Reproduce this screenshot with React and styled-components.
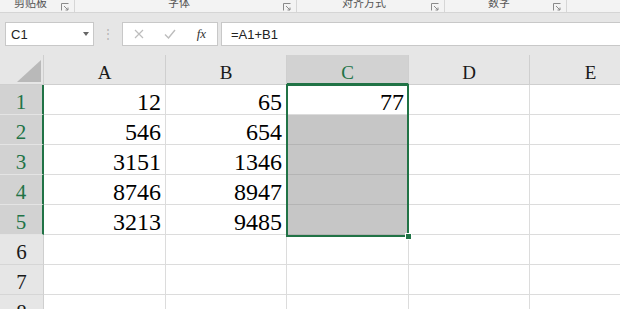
import React from 'react'
import styled, { createGlobalStyle } from 'styled-components'

const GlobalStyle = createGlobalStyle`
  html, body {
    margin: 0;
    padding: 0;
    background: #e6e6e6;
    overflow: hidden;
  }
`;

const Window = styled.div`
  width: 620px;
  height: 309px;
  overflow: hidden;
  background: #e6e6e6;
  font-family: "Liberation Sans", Arial, sans-serif;
`;

const Ribbon = styled.div`
  height: 13px;
  box-sizing: border-box;
  display: flex;
  background: #f3f3f3;
  border-bottom: 1px solid #d5d5d5;
  overflow: hidden;
`;

const Group = styled.div`
  width: ${p => p.w}px;
  display: flex;
  align-items: flex-start;
  border-right: 1px solid #d6d6d6;
  box-sizing: border-box;
`;

const GroupLabel = styled.div`
  flex: 1;
  text-align: center;
  margin-top: -5px;
  font-family: "Noto Sans CJK SC", sans-serif;
  font-size: 11px;
  line-height: 15px;
  color: #555;
  white-space: nowrap;
`;

const Launcher = styled.svg`
  width: 8px;
  height: 8px;
  margin: 3px 5px 0 0;
  flex: none;
`;

const FormulaRow = styled.div`
  height: 42px;
  box-sizing: border-box;
  padding: 9px 0 0 5px;
  display: flex;
  align-items: flex-start;
`;

const NameBox = styled.div`
  width: 89px;
  height: 24px;
  box-sizing: border-box;
  background: #fff;
  border: 1px solid #c8c8c8;
  display: flex;
  align-items: center;
  justify-content: space-between;
  padding: 0 4px 0 5px;
  font-size: 13px;
  color: #222;
`;

const Caret = styled.span`
  width: 0;
  height: 0;
  border-left: 3px solid transparent;
  border-right: 3px solid transparent;
  border-top: 4px solid #666;
`;

const Dots = styled.div`
  width: 28px;
  height: 24px;
  display: flex;
  align-items: center;
  justify-content: center;
  color: #b4b4b4;
  font-size: 12px;
`;

const ButtonBox = styled.div`
  width: 96px;
  height: 24px;
  box-sizing: border-box;
  background: #fff;
  border: 1px solid #c8c8c8;
  display: flex;
`;

const FxButton = styled.div`
  width: 32px;
  display: flex;
  align-items: center;
  justify-content: center;
  font-family: "Liberation Serif", serif;
  font-style: italic;
  font-size: 13px;
  color: #333;
`;

const FormulaInput = styled.div`
  flex: 1;
  height: 24px;
  margin-left: 3px;
  box-sizing: border-box;
  background: #fff;
  border: 1px solid #c8c8c8;
  border-right: none;
  padding-left: 9px;
  display: flex;
  align-items: center;
  font-size: 13px;
  color: #222;
`;

const Sheet = styled.div`
  position: relative;
  display: grid;
  grid-template-columns: 44px 122px 121px 122px 121px 122px;
  grid-auto-rows: 30px;
  width: 652px;
`;

const Corner = styled.div`
  position: relative;
  background: #e6e6e6;
  border-right: 1px solid #cfcfcf;
  border-bottom: 1px solid #cfcfcf;
  box-sizing: border-box;
  &::after {
    content: "";
    position: absolute;
    right: 2px;
    bottom: 2px;
    width: 24px;
    height: 22px;
    background: #b9b9b9;
    clip-path: polygon(100% 0, 100% 100%, 0 100%);
  }
`;

const ColHead = styled.div`
  box-sizing: border-box;
  background: ${p => (p.active ? '#d2d2d2' : '#e6e6e6')};
  color: ${p => (p.active ? '#217346' : '#1a1a1a')};
  border-right: 1px solid #cfcfcf;
  border-bottom: ${p => (p.active ? '2px solid #217346' : '1px solid #cfcfcf')};
  text-align: center;
  font-family: "Liberation Serif", serif;
  font-size: 19px;
  padding-top: 7px;
  line-height: 21px;
`;

const RowHead = styled.div`
  box-sizing: border-box;
  background: ${p => (p.active ? '#d2d2d2' : '#e6e6e6')};
  color: ${p => (p.active ? '#217346' : '#1a1a1a')};
  border-right: ${p => (p.active ? '2px solid #217346' : '1px solid #cfcfcf')};
  border-bottom: 1px solid ${p => (p.active ? '#e4e4e4' : '#d6d6d6')};
  text-align: center;
  font-family: "Liberation Serif", serif;
  font-size: 21px;
  padding-top: 4px;
  line-height: 26px;
`;

const Cell = styled.div`
  box-sizing: border-box;
  background: ${p => (p.shaded ? '#c6c6c6' : '#fff')};
  border-right: 1px solid #dcdcdc;
  border-bottom: 1px solid ${p => (p.shaded ? '#b4b4b4' : '#dcdcdc')};
  text-align: right;
  padding: 4px 4px 0 0;
  font-family: "Liberation Serif", serif;
  font-size: 24px;
  line-height: 26px;
  color: #000;
`;

const Selection = styled.div`
  position: absolute;
  left: 286px;
  top: 29px;
  width: 123px;
  height: 153px;
  box-sizing: border-box;
  border: 2px solid #217346;
  pointer-events: none;
`;

const FillHandle = styled.div`
  position: absolute;
  right: -5px;
  bottom: -5px;
  width: 5px;
  height: 5px;
  background: #217346;
  border: 1px solid #fff;
`;

const groups = [
  { w: 75, label: '剪贴板' },
  { w: 222, label: '字体' },
  { w: 148, label: '对齐方式' },
  { w: 122, label: '数字' },
];

const cols = ['A', 'B', 'C', 'D', 'E'];

const data = [
  [12, 65, 77],
  [546, 654, ''],
  [3151, 1346, ''],
  [8746, 8947, ''],
  [3213, 9485, ''],
  ['', '', ''],
  ['', '', ''],
  ['', '', ''],
];

const LauncherIcon = () => (
  <Launcher viewBox="0 0 8 8">
    <path d="M0.5 7.5V0.5H7.5" fill="none" stroke="#8a8a8a" strokeWidth="1" />
    <path d="M3 3L7 7M7 4.5V7H4.5" fill="none" stroke="#8a8a8a" strokeWidth="1" />
  </Launcher>
);

const App = () => {
  return (
    <Window>
      <GlobalStyle />
      <Ribbon>
        {groups.map(g => (
          <Group key={g.label} w={g.w}>
            <GroupLabel>{g.label}</GroupLabel>
            <LauncherIcon />
          </Group>
        ))}
      </Ribbon>
      <FormulaRow>
        <NameBox>
          C1
          <Caret />
        </NameBox>
        <Dots>⋮</Dots>
        <ButtonBox>
          <FxButton>
            <svg width="10" height="10" viewBox="0 0 10 10">
              <path d="M1 1L9 9M9 1L1 9" stroke="#bdbdbd" strokeWidth="1.2" />
            </svg>
          </FxButton>
          <FxButton>
            <svg width="12" height="10" viewBox="0 0 12 10">
              <path d="M1 5.5L4.5 9L11 1" fill="none" stroke="#bdbdbd" strokeWidth="1.4" />
            </svg>
          </FxButton>
          <FxButton>fx</FxButton>
        </ButtonBox>
        <FormulaInput>=A1+B1</FormulaInput>
      </FormulaRow>
      <Sheet>
        <Corner />
        {cols.map(c => (
          <ColHead key={c} active={c === 'C'}>{c}</ColHead>
        ))}
        {data.map((row, r) => (
          <React.Fragment key={r}>
            <RowHead active={r < 5}>{r + 1}</RowHead>
            {row.map((v, c) => (
              <Cell key={c} shaded={c === 2 && r > 0 && r < 5}>{v}</Cell>
            ))}
            <Cell />
            <Cell />
          </React.Fragment>
        ))}
        <Selection>
          <FillHandle />
        </Selection>
      </Sheet>
    </Window>
  )
}

export default App
